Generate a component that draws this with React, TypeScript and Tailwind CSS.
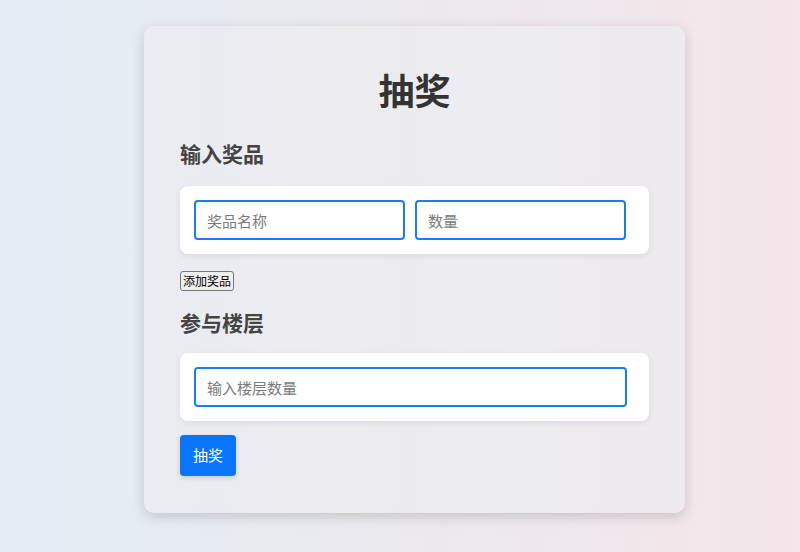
import React, { useState } from 'react';

const font = { fontFamily: '"Noto Sans CJK SC", "Noto Sans", sans-serif' };

const inputCls =
  'h-[40px] rounded-[4px] border-2 border-[#1b7cf0] bg-white pl-[11px] text-[15px] text-[#333] placeholder:text-[#7a7a7a] outline-none';

export default function App() {
  const [prizeName, setPrizeName] = useState('');
  const [prizeCount, setPrizeCount] = useState('');
  const [floors, setFloors] = useState('');

  return (
    <div
      className="min-h-[552px] w-full bg-gradient-to-r from-[#e3eef4] to-[#f4e6ea] pt-[26px] pl-[144px]"
      style={font}
    >
      <div className="w-[541px] rounded-[10px] bg-[rgba(236,237,241,0.7)] px-[36px] pt-[36px] pb-[37px] shadow-[0_4px_14px_rgba(0,0,0,0.16)]">
        <h1 className="text-center text-[36px] font-bold leading-[54px] text-[#333]">抽奖</h1>

        <h2 className="mt-[22px] text-[21px] font-bold leading-[30px] text-[#444]">输入奖品</h2>
        <div className="mt-[18px] flex gap-[10px] rounded-[8px] bg-white py-[14px] pl-[14px] pr-[22px] shadow-[0_2px_6px_rgba(0,0,0,0.08)]">
          <input
            className={`${inputCls} w-[211px]`}
            placeholder="奖品名称"
            value={prizeName}
            onChange={(e) => setPrizeName(e.target.value)}
          />
          <input
            className={`${inputCls} w-[211px]`}
            placeholder="数量"
            value={prizeCount}
            onChange={(e) => setPrizeCount(e.target.value)}
          />
        </div>

        <button className="mt-[17px] block h-[20px] rounded-[3px] border border-[#767676] bg-[#efefef] px-[2px] text-[12px] leading-[18px] text-black">
          添加奖品
        </button>

        <h2 className="mt-[16px] text-[21px] font-bold leading-[30px] text-[#444]">参与楼层</h2>
        <div className="mt-[16px] rounded-[8px] bg-white py-[14px] pl-[14px] pr-[22px] shadow-[0_2px_6px_rgba(0,0,0,0.08)]">
          <input
            className={`${inputCls} w-full`}
            placeholder="输入楼层数量"
            value={floors}
            onChange={(e) => setFloors(e.target.value)}
          />
        </div>

        <button className="mt-[14px] block h-[41px] rounded-[4px] bg-[#0a74fb] px-[13px] text-[15px] text-white shadow-[0_2px_5px_rgba(0,0,0,0.15)]">
          抽奖
        </button>
      </div>
    </div>
  );
}
